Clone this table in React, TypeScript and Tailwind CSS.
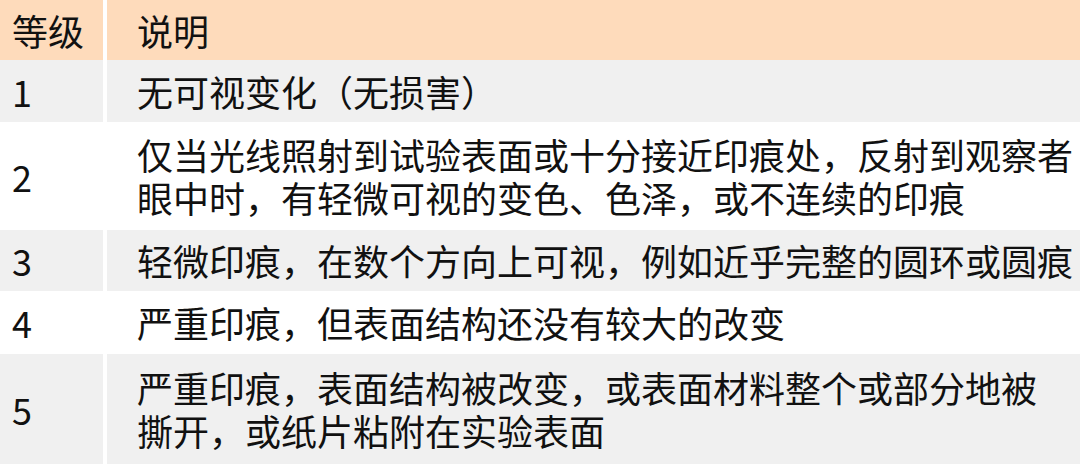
export default function App() {
  const font = { fontFamily: '"Noto Sans CJK SC", "Noto Sans", sans-serif' };
  const rows: { n: string; lines: string[]; h: string; bg: string }[] = [
    { n: "1", lines: ["无可视变化（无损害）"], h: "h-[62px]", bg: "bg-[#f0f0f0]" },
    {
      n: "2",
      lines: ["仅当光线照射到试验表面或十分接近印痕处，反射到观察者", "眼中时，有轻微可视的变色、色泽，或不连续的印痕"],
      h: "h-[108px]",
      bg: "bg-white",
    },
    { n: "3", lines: ["轻微印痕，在数个方向上可视，例如近乎完整的圆环或圆痕"], h: "h-[61px]", bg: "bg-[#f0f0f0]" },
    { n: "4", lines: ["严重印痕，但表面结构还没有较大的改变"], h: "h-[63px]", bg: "bg-white" },
    {
      n: "5",
      lines: ["严重印痕，表面结构被改变，或表面材料整个或部分地被", "撕开，或纸片粘附在实验表面"],
      h: "h-[110px]",
      bg: "bg-[#f0f0f0]",
    },
  ];
  return (
    <div className="w-[1080px] h-[464px] bg-white overflow-hidden text-[36px] leading-[43px] text-[#111]" style={font}>
      <div className="grid grid-cols-[103px_1fr] gap-x-[4px]">
        <div className="h-[60px] bg-[#fedbbb] flex items-center pl-[12px]">等级</div>
        <div className="h-[60px] bg-[#fedbbb] flex items-center pl-[30px]">说明</div>
        {rows.map((r) => (
          <>
            <div key={r.n + "a"} className={`${r.h} ${r.bg} flex items-center pl-[12px]`}>
              {r.n}
            </div>
            <div key={r.n + "b"} className={`${r.h} ${r.bg} flex flex-col justify-center pl-[30px] whitespace-nowrap`}>
              {r.lines.map((l, i) => (
                <div key={i}>{l}</div>
              ))}
            </div>
          </>
        ))}
      </div>
    </div>
  );
}
